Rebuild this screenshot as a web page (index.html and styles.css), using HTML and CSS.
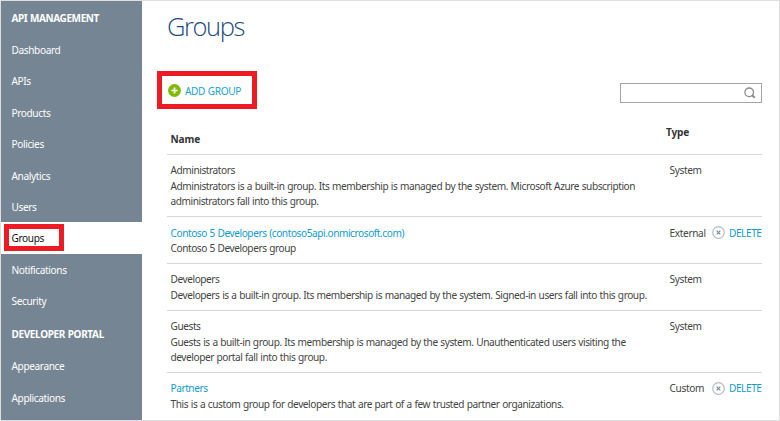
FILE: index.html
```html
<!DOCTYPE html>
<html lang="en">
<head>
<meta charset="utf-8">
<title>Groups</title>
<link rel="stylesheet" href="styles.css">
</head>
<body>
<div class="app">
  <nav class="sidebar">
    <h2 class="nav-heading">API MANAGEMENT</h2>
    <a class="nav-item">Dashboard</a>
    <a class="nav-item">APIs</a>
    <a class="nav-item">Products</a>
    <a class="nav-item">Policies</a>
    <a class="nav-item">Analytics</a>
    <a class="nav-item">Users</a>
    <a class="nav-item active">Groups<span class="callout callout-nav"></span></a>
    <a class="nav-item">Notifications</a>
    <a class="nav-item">Security</a>
    <h2 class="nav-heading second">DEVELOPER PORTAL</h2>
    <a class="nav-item">Appearance</a>
    <a class="nav-item">Applications</a>
  </nav>
  <main class="content">
    <h1 class="title">Groups</h1>
    <div class="toolbar">
      <a class="add">
        <svg class="add-icon" width="13" height="13" viewBox="0 0 13 13"><circle cx="6.5" cy="6.5" r="6.4" fill="#7fba00"/><path d="M6.5 3.4v6.2M3.4 6.5h6.2" stroke="#fff" stroke-width="1.7"/></svg>
        <span class="add-label">ADD GROUP</span>
        <span class="callout callout-add"></span>
      </a>
      <div class="search">
        <svg width="12" height="12" viewBox="0 0 12 12" fill="none" stroke="#8a8a8a"><circle cx="5.2" cy="5.3" r="4.3" stroke-width="1.3"/><path d="M7.8 8l3 2.7" stroke-width="1.9"/></svg>
      </div>
    </div>
    <div class="row head"><div class="name">Name</div><div class="type">Type</div></div>
    <div class="row">
      <div class="name"><p>Administrators</p><p>Administrators is a built-in group. Its membership is managed by the system. Microsoft Azure subscription</p><p>administrators fall into this group.</p></div>
      <div class="type">System</div>
    </div>
    <div class="row">
      <div class="name"><p class="link">Contoso 5 Developers (contoso5api.onmicrosoft.com)</p><p>Contoso 5 Developers group</p></div>
      <div class="type">External</div>
      <a class="delete"><svg width="13" height="13" viewBox="0 0 13 13" fill="none"><circle cx="6.5" cy="6.5" r="5.8" stroke="#b3bcc6" stroke-width="1.2"/><path d="M4.7 4.7l3.6 3.6M8.3 4.7l-3.6 3.6" stroke="#7a8796" stroke-width="1.2"/></svg><span>DELETE</span></a>
    </div>
    <div class="row">
      <div class="name"><p>Developers</p><p>Developers is a built-in group. Its membership is managed by the system. Signed-in users fall into this group.</p></div>
      <div class="type">System</div>
    </div>
    <div class="row">
      <div class="name"><p>Guests</p><p>Guests is a built-in group. Its membership is managed by the system. Unauthenticated users visiting the</p><p>developer portal fall into this group.</p></div>
      <div class="type">System</div>
    </div>
    <div class="row last">
      <div class="name"><p class="link">Partners</p><p>This is a custom group for developers that are part of a few trusted partner organizations.</p></div>
      <div class="type">Custom</div>
      <a class="delete"><svg width="13" height="13" viewBox="0 0 13 13" fill="none"><circle cx="6.5" cy="6.5" r="5.8" stroke="#b3bcc6" stroke-width="1.2"/><path d="M4.7 4.7l3.6 3.6M8.3 4.7l-3.6 3.6" stroke="#7a8796" stroke-width="1.2"/></svg><span>DELETE</span></a>
    </div>
  </main>
</div>
</body>
</html>
```
FILE: styles.css
```css
* { box-sizing: border-box; }
body { margin: 0; background: #fff; color: #444; font: 10.1px/15.6px "Noto Sans", "Open Sans", sans-serif; letter-spacing: -0.43px; word-spacing: 0.45px; }
h1, h2, p { margin: 0; font: inherit; }
.app { display: flex; width: 780px; height: 421px; border: 1px solid #dedede; overflow: hidden; }
.sidebar { flex: none; width: 141px; background: #768594; color: #fff; letter-spacing: -0.38px; }
.nav-heading { height: 33px; padding-left: 10.5px; line-height: 34px; font-weight: 700; font-size: 10px; letter-spacing: -0.4px; white-space: nowrap; }
.nav-heading.second { height: 33.6px; line-height: 34px; letter-spacing: -0.35px; }
.nav-item { position: relative; display: block; height: 31.4px; padding-left: 10.5px; line-height: 32.2px; }
.nav-item.active { background: #fff; color: #111; }
.callout { position: absolute; border: 5px solid #ed1c24; }
.callout-nav { left: 3px; top: 2px; width: 60px; height: 27px; }
.callout-add { left: -10px; top: -13px; width: 100px; height: 38px; }
.content { flex: none; width: 595px; margin-left: 25px; }
.title { height: 70px; padding-top: 4px; font: 300 25.5px/42px "Open Sans", "Noto Sans", sans-serif; letter-spacing: -1.4px; color: #1d4b7c; }
.toolbar { display: flex; justify-content: space-between; height: 45px; padding-top: 13px; }
.add { position: relative; display: flex; align-items: center; width: 90px; height: 13px; gap: 4px; padding-left: 1px; color: #1b9fd0; white-space: nowrap; }
.add-label { position: relative; top: 1px; letter-spacing: -0.35px; }
.search { display: flex; justify-content: flex-end; align-items: center; width: 142px; height: 20px; margin-top: -1px; padding-right: 5px; border: 1px solid #a5a5a5; }
.row { display: flex; border-bottom: 1px solid #d6d6d6; padding: 8.15px 0 6.45px 3.5px; white-space: nowrap; }
.row.last { border: 0; }
.name { flex: none; width: 499px; }
.type { flex: none; width: 42px; letter-spacing: -0.35px; }
.head { height: 39px; padding-top: 16px; color: #333; font-weight: 700; letter-spacing: -0.15px; }
.head .type { margin: -7px 0 0 -3.5px; letter-spacing: -0.15px; }
.link, .delete { color: #0f9bcf; }
.delete { display: flex; gap: 4.5px; height: 15.6px; align-items: center; }
.delete svg { position: relative; top: -1px; }
```
